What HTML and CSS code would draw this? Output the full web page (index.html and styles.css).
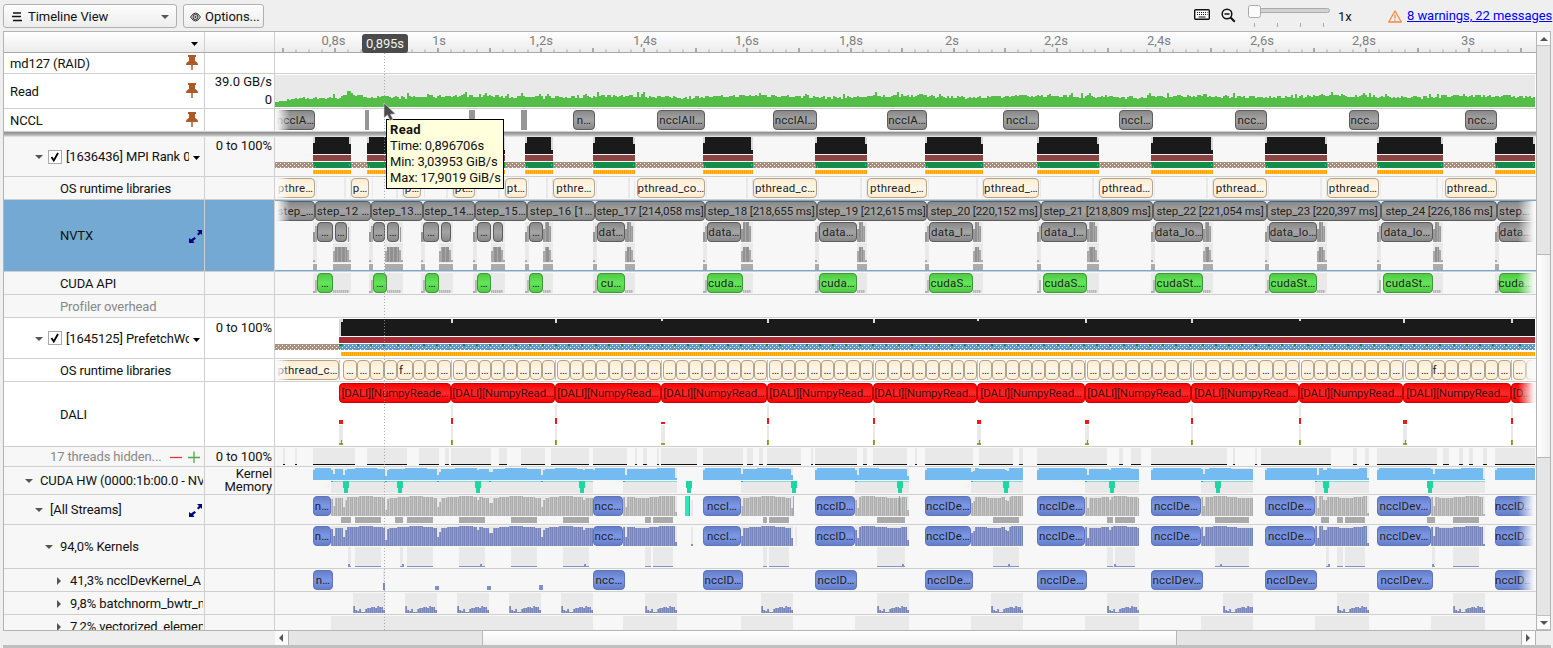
FILE: index.html
```
<!DOCTYPE html>
<html lang="en">
<head>
<meta charset="utf-8">
<title>Timeline View</title>
<link rel="stylesheet" href="styles.css">
</head>
<body>
<div class="app">
  <header class="toolbar">
    <button class="btn view-select">
      <svg class="ic-menu" width="12" height="10" viewBox="0 0 12 10"><path d="M2 1h8M1 4.500h9M2 8.500h9" stroke="#111" stroke-width="1.300"/></svg>
      <span class="view-name">Timeline View</span>
      <svg width="8" height="4" viewBox="0 0 8 4"><path d="M0 0h8L4 4z" fill="#555"/></svg>
    </button>
    <button class="btn options">
      <svg width="11" height="10" viewBox="0 0 11 10" fill="none" stroke="#222"><path d="M.6 5Q5.500-3 10.400 5Q5.500 13 .6 5z"/><circle cx="5.500" cy="5" r="2.500"/><circle cx="5.500" cy="5" r=".7"/></svg>
      <span>Options...</span>
    </button>
    <div class="spacer"></div>
    <svg class="keyboard" width="16" height="11" viewBox="0 0 16 11"><rect x=".7" y=".7" width="14.600" height="9.600" rx="1" fill="#fff" stroke="#111" stroke-width="1.400"/><path d="M3 3.500h10.500M3 5.500h10.500" stroke="#111" stroke-dasharray="1 1"/><path d="M4.500 8h7" stroke="#111"/></svg>
    <svg class="magnifier" width="15" height="15" viewBox="0 0 15 15" fill="none" stroke="#111" stroke-width="1.500"><circle cx="6" cy="6" r="4.800"/><path d="M3.500 6h5"/><path d="M9.500 9.500l4.300 4.300" stroke-width="2"/></svg>
    <svg class="slider" width="84" height="28" viewBox="1247 0 84 28"><rect x="1250.500" y="8.500" width="79" height="4" rx="2" fill="#d2d2d2" stroke="#ababab"/><rect x="1248.500" y="5.500" width="12" height="12" rx="2" fill="#fbfbfb" stroke="#aaa"/><path d="M1254.500 23v4M1277.500 23v4M1300.500 23v4M1323.500 23v4" stroke="#aaa"/></svg>
    <span class="zoom-value">1x</span>
    <svg class="warn" width="14" height="13" viewBox="0 0 14 13" fill="none" stroke="#f58a3c" stroke-width="1.300"><path d="M7 1L13.300 12H.7z" stroke-linejoin="round"/><path d="M7 4.500v4M7 9.500v1.300"/></svg>
    <a class="messages" href="#">8 warnings, 22 messages</a>
  </header>
  <main class="frame">
    <div class="grid" id="grid"></div>
    <div class="vscroll">
      <div class="sb-btn"><svg width="8" height="4" viewBox="0 0 8 4"><path d="M0 4L4 0L8 4z" fill="#555"/></svg></div>
      <div class="v-before"></div><div class="v-thumb"></div><div class="v-after"></div>
      <div class="sb-btn"><svg width="8" height="4" viewBox="0 0 8 4"><path d="M0 0L4 4L8 0z" fill="#555"/></svg></div>
    </div>
    <div class="cursor-line"></div>
    <div class="time-flag">0,895s</div>
    <div class="tooltip"><b>Read</b><span>Time: 0,896706s</span><span>Min: 3,03953 GiB/s</span><span>Max: 17,9019 GiB/s</span></div>
    <svg class="pointer" width="13" height="20" viewBox="0 0 13 20"><path d="M1 1v15l3.500-3l2.500 5.500l3-1.300l-2.500-5l5-.2z" fill="#4b4b4b" stroke="#ddd" stroke-width=".6"/></svg>
  </main>
  <div class="hscroll">
    <div class="h-gap"></div>
    <div class="sb-btn side"><svg width="4" height="8" viewBox="0 0 4 8"><path d="M4 0L0 4L4 8z" fill="#555"/></svg></div>
    <div class="h-before"></div><div class="h-thumb"></div><div class="h-after"></div>
    <div class="sb-btn side"><svg width="4" height="8" viewBox="0 0 4 8"><path d="M0 0L4 4L0 8z" fill="#555"/></svg></div>
  </div>
  <div class="footer-strip"></div>
</div>
<svg width="0" height="0" class="defs">
  <defs>
    <linearGradient id="gray" x2="0" y2="1"><stop offset="0" stop-color="#878787"/><stop offset=".5" stop-color="#a5a5a5"/><stop offset="1" stop-color="#878787"/></linearGradient>
    <linearGradient id="green" x2="0" y2="1"><stop offset="0" stop-color="#50c846"/><stop offset=".5" stop-color="#64e658"/><stop offset="1" stop-color="#50c846"/></linearGradient>
    <linearGradient id="cream" x2="0" y2="1"><stop offset="0" stop-color="#feebcd"/><stop offset=".5" stop-color="#fff7ea"/><stop offset="1" stop-color="#feebcd"/></linearGradient>
    <linearGradient id="red" x2="0" y2="1"><stop offset="0" stop-color="#fa0000"/><stop offset=".5" stop-color="#ff2a2a"/><stop offset="1" stop-color="#fa0000"/></linearGradient>
    <linearGradient id="blue" x2="0" y2="1"><stop offset="0" stop-color="#647cc4"/><stop offset=".5" stop-color="#7c98e8"/><stop offset="1" stop-color="#647cc4"/></linearGradient>
    <linearGradient id="fadeL"><stop offset="0" stop-color="#fafafa"/><stop offset=".2" stop-color="#fafafa" stop-opacity=".9"/><stop offset="1" stop-color="#fafafa" stop-opacity="0"/></linearGradient>
    <linearGradient id="fadeR"><stop offset="0" stop-color="#fafafa" stop-opacity="0"/><stop offset=".85" stop-color="#fafafa" stop-opacity=".95"/><stop offset="1" stop-color="#fafafa"/></linearGradient>
    <pattern id="sBlue" width="4" height="2" patternUnits="userSpaceOnUse"><rect width="4" height="2" fill="#7586bd"/><rect x="1" width="1" height="2" fill="#99a4c4"/><rect x="3" width="1" height="2" fill="#8b98c2"/></pattern>
    <pattern id="sGray" width="4" height="2" patternUnits="userSpaceOnUse"><rect width="4" height="2" fill="#adadad"/><rect x="1" width="1" height="2" fill="#cdcdcd"/><rect x="3" width="1" height="2" fill="#bcbcbc"/></pattern>
    <pattern id="sDark" width="4" height="2" patternUnits="userSpaceOnUse"><rect width="4" height="2" fill="#919191"/><rect x="1" width="1" height="2" fill="#aaa"/></pattern>
    <pattern id="sOrange" width="2" height="2" patternUnits="userSpaceOnUse"><rect width="1" height="2" fill="#ffa500"/><rect x="1" width="1" height="2" fill="#ffb938"/></pattern>
    <pattern id="hBrown" width="4" height="4" patternUnits="userSpaceOnUse"><rect width="4" height="4" fill="#ab8e7e"/><path d="M0 3h1v1H0zM2 1h1v1H2z" fill="#fff"/></pattern>
    <pattern id="hBlue" width="4" height="4" patternUnits="userSpaceOnUse"><rect width="4" height="4" fill="#5a9bd0"/><path d="M0 1h1v1H0zM2 3h1v1H2z" fill="#fff"/></pattern>
  </defs>
</svg>
<script src="timeline.js"></script>
</body>
</html>
```
FILE: styles.css
```
* { box-sizing: border-box; }
body { margin: 0; background: #efefef; color: #111; font: 13px/16px Roboto, sans-serif; letter-spacing: -.13px; overflow: hidden; }
svg { display: block; flex: none; }
.defs { position: absolute; }
.app { width: 1553px; height: 648px; display: flex; flex-direction: column; }
.toolbar { height: 31px; display: flex; align-items: center; padding: 1px 2px 0 3px; }
.btn { height: 24px; display: flex; align-items: center; font: inherit; letter-spacing: -.05px; color: inherit; border: 1px solid #b0b0b0; border-radius: 3px; background: linear-gradient(#fdfdfd, #ededed); padding: 2px 6px 0; }
.view-select { width: 174px; padding: 2px 7px 0 7px; }
.view-name { flex: 1; text-align: left; margin-left: 5px; }
.options { margin-left: 6px; width: 81px; gap: 4px; white-space: nowrap; }
.spacer { flex: 1; }
.keyboard { margin-right: 11px; margin-top: -3px; }
.magnifier { margin-right: 11px; margin-top: -2px; }
.slider { margin-right: 7px; align-self: flex-start; margin-top: -1px; }
.zoom-value { width: 50px; padding-top: 2px; }
.warn { margin-right: 5px; }
.messages { color: #00f; width: 144px; white-space: nowrap; letter-spacing: -.06px; }
.frame { position: relative; height: 600px; margin-left: 3px; width: 1548px; border: 1px solid #b4b4b4; display: flex; background: #fff; }
.grid { width: 1532px; height: 598px; overflow: hidden; display: flex; flex-direction: column; }
.row { display: flex; flex: none; border-bottom: 1px solid #cfcfcf; background: #f7f7f7; }
.row.white { background: #fff; }
.row.head { background: linear-gradient(#fff, #ececec); border-color: #a9a9a9; }
.row.selected .label, .row.selected .value { background: #74a9d3; }
.label { width: 201px; border-right: 1px solid #cfcfcf; display: flex; align-items: center; padding-right: 1px; padding-top: 1px; overflow: hidden; }
.value { width: 70px; border-right: 1px solid #cfcfcf; text-align: right; padding: 0 2px 0 0; line-height: 13px; letter-spacing: -.05px; }
.value div { padding-top: 3px; }
.value.read div { padding: 1px 0 4px; }
.value.high div { padding-top: 2px; }
.value.tight div { padding: 0; }
.name { flex: 1; white-space: nowrap; overflow: hidden; }
.muted { color: #888; }
.arrow { margin-right: 7px; }
.check { width: 14px; height: 14px; border: 1px solid #aaa; background: #fff; margin: -1px 4px 0 -2px; flex: none; }
.pin { margin: -2px 4px 0 0; }
.drop { margin: 2px 3px 0 4px; }
.drop.wide { margin-right: 5px; }
.divider { flex: none; height: 5px; background: linear-gradient(#8e8e8e, #a9a9a9 45%, #bbb 65%, #eee); }
.track { width: 1261px; }
.ev { font-size: 11.500px; fill: #222; letter-spacing: .2px; text-anchor: middle; }
.ev.long { letter-spacing: -.1px; }
.ev.dark { fill: #4a0a0a; letter-spacing: -.13px; }
.tick-label { font-size: 13px; fill: #808080; text-anchor: middle; letter-spacing: 0; }
.vscroll { width: 14px; border-left: 1px solid #b4b4b4; display: flex; flex-direction: column; background: #e5e5e5; }
.sb-btn { height: 14px; flex: none; background: #fbfbfb; display: flex; align-items: center; justify-content: center; border-bottom: 1px solid #c0c0c0; }
.v-before { height: 208px; }
.v-thumb { height: 204px; background: linear-gradient(90deg, #fff, #efefef); border: solid #b8b8b8; border-width: 1px 0; }
.v-after { flex: 1; border-bottom: 1px solid #c0c0c0; }
.hscroll { height: 14px; display: flex; width: 1536px; background: #e5e5e5; }
.h-gap { width: 275px; background: #efefef; }
.sb-btn.side { width: 14px; height: 14px; border: 0; border-right: 1px solid #b4b4b4; padding-right: 1px; }
.h-before { width: 193px; }
.h-thumb { width: 695px; background: linear-gradient(#fff, #efefef); border: solid #b8b8b8; border-width: 0 1px; }
.h-after { flex: 1; border-right: 1px solid #b4b4b4; }
.footer-strip { flex: 1; margin: 0 2px 0 3px; background: #bfbfbf; }
.cursor-line { position: absolute; left: 380px; top: 21px; width: 1px; height: 577px; background: repeating-linear-gradient(#999 0 1px, transparent 1px 3px); opacity: .8; }
.time-flag { position: absolute; left: 358px; top: 2px; width: 46px; height: 19px; background: #4b4b4b; color: #f3f3f3; border-radius: 3px; line-height: 20px; text-align: center; letter-spacing: -.1px; }
.tooltip { position: absolute; left: 382px; top: 87px; width: 118px; height: 70px; border: 1px solid #000; background: #ffffdc; padding: 2px 0 0 3px; display: flex; flex-direction: column; white-space: nowrap; }
.tooltip b { letter-spacing: .3px; }
.pointer { position: absolute; left: 379px; top: 70px; }
```
FILE: timeline.js
```
const X0 = 275, W = 1261;
const LIGHT = '#e9e9e9';
const R = (x, y, x2, y2, f) => `<rect x="${x}" y="${y}" width="${x2 - x}" height="${y2 - y}" fill="${f}"/>`;
const STROKE = { gray: '#5c5c5c', green: '#3c9a36', cream: '#b3a58c', red: '#c80000', blue: '#5d76bd' };
const text = (s, x, y, c = 'ev') => `<text class="${c}" x="${x}" y="${y}">${s}</text>`;
function ev(x, x2, y, kind, s = '') {
  const l = Math.max(x, 270), r = Math.min(x2, 1545);
  const cx = s ? (Math.max(l, 276) + Math.min(r, 1532)) / 2 : 0;
  return `<rect x="${l + .5}" y="${y + .5}" width="${r - l - 1}" height="19" rx="3.500" fill="url(#${kind})" stroke="${STROKE[kind]}"/>` +
    (s ? text(s, cx, s === '…' ? y + 14 : y + 13.500, kind === 'red' ? 'ev dark' : s.length > 15 ? 'ev long' : 'ev') : '');
}
const fade = (y, l = true, r = true) =>
  (l ? `<rect x="275" y="${y}" width="15" height="20" fill="url(#fadeL)"/>` : '') +
  (r ? `<rect x="1518" y="${y}" width="18" height="20" fill="url(#fadeR)"/>` : '');
let seed = 7;
const rnd = () => (seed = (seed * 16807) % 2147483647) / 2147483647;

const steps = [270, 315, 371, 423, 475, 527, 595, 705, 817, 927, 1041, 1153, 1267, 1381, 1497, 1545];
const stepText = ['step_…', 'step_12 …', 'step_13…', 'step_14…', 'step_15…', 'step_16 [1…', 'step_17 [214,058 ms]', 'step_18 [218,655 ms]', 'step_19 [212,615 ms]', 'step_20 [220,152 ms]', 'step_21 [218,809 ms]', 'step_22 [221,054 ms]', 'step_23 [220,397 ms]', 'step_24 [226,186 ms]', 'step…'];
const busy = [[313, 351], [369, 403], [421, 453], [473, 505], [525, 553], [593, 635], [703, 753], [815, 867], [925, 983], [1037, 1099], [1151, 1213], [1265, 1327], [1377, 1443], [1495, 1545]];
const data = [[317, 333, '…'], [373, 385, '…'], [423, 439, '…'], [477, 491, '…'], [529, 543, '…'], [597, 625, 'dat…'], [707, 741, 'data…'], [819, 857, 'data…'], [929, 973, 'data_l…'], [1041, 1087, 'data_l…'], [1155, 1203, 'data_lo…'], [1269, 1317, 'data_lo…'], [1381, 1433, 'data_lo…'], [1499, 1545, 'data…']];
const data2 = [[335, 347], [387, 399], [441, 451], [493, 503]];
const cuda = ['…', '…', '…', '…', '…', 'cu…', 'cuda…', 'cuda…', 'cudaS…', 'cudaS…', 'cudaSt…', 'cudaSt…', 'cudaSt…', 'cuda…'];
const waits = [[270, 315, 'pthre…'], [351, 369, 'p…'], [403, 421, 'p…'], [453, 475, 'pt…'], [505, 527, 'pt…'], [553, 595, 'pthre…'], [637, 705, 'pthread_co…'], [753, 817, 'pthread_c…'], [867, 927, 'pthread_…'], [983, 1039, 'pthread_…'], [1099, 1153, 'pthread…'], [1213, 1267, 'pthread…'], [1327, 1379, 'pthread…'], [1445, 1497, 'pthread…']];
const dali = [339, 451, 555, 661, 767, 873, 977, 1085, 1191, 1299, 1403, 1511, 1545];
const compute = [[331, 593], [623, 677], [741, 793], [855, 909], [971, 1023], [1085, 1139], [1201, 1253], [1315, 1369], [1431, 1485]];
const nccl = [[313, 331, 'n…', 'n…'], [593, 623, 'ncc…', 'ncc…'], [703, 741, 'nccl…', 'ncclD…'], [815, 855, 'ncclD…', 'ncclD…'], [925, 971, 'ncclDe…', 'ncclDe…'], [1037, 1085, 'ncclDe…', 'ncclDe…'], [1151, 1201, 'ncclDe…', 'ncclDev…'], [1265, 1315, 'ncclDe…', 'ncclDev…'], [1377, 1431, 'ncclDev…', 'ncclDev…'], [1495, 1545, 'ncclD…', 'ncclD…']];
const memops = [343, 397, 475, 579, 686, 791, 897, 1003, 1109, 1215, 1323, 1427];
const dips = { 331: .85, 333: .5, 343: .45, 345: .8, 385: .3, 387: .85, 437: .45, 439: .7, 489: .65, 491: .65, 541: .45, 543: .8, 477: .8, 583: .8, 625: .45, 675: .2, 741: .5, 791: .4, 855: .8, 857: .4, 907: .3, 971: .65, 973: .75, 1005: .8, 1007: .75, 1087: .4, 1109: .8, 1203: .5, 1317: .4, 1323: .8, 1325: .8, 1367: .15, 1433: .5, 1483: .1 };
const blocks = [[341, 351], [355, 381], [395, 403], [407, 433], [459, 485], [511, 537], [563, 589], [645, 651], [653, 673], [763, 767], [769, 789], [877, 905], [993, 1019], [1107, 1113], [1115, 1135], [1215, 1249], [1321, 1329], [1337, 1343], [1345, 1365], [1427, 1435], [1453, 1479]];

function load(y, h, fill) {
  return compute.map(([a, b]) => {
    let s = R(a, y, b, y + h, LIGHT);
    for (let x = a; x < b; x += 2) {
      const wave = .95 + .04 * Math.sin(x / 8);
      s += R(x, y + Math.round(h * (1 - (dips[x] || wave))), Math.min(x + 2, b), y + h, fill);
    }
    return s;
  }).join('');
}
function ruler() {
  let s = '';
  for (let i = -4; i <= 92; i++) {
    const x = Math.round(334 + i * 12.888);
    if (x > 1535) break;
    s += i % 4 === 0 ? R(x, 48, x + 2, 52, '#aaa') : R(x, 49.500, x + 2, 52, '#cbcbcb');
  }
  [['0,8s', 333.5], ['1s', 439], ['1,2s', 541], ['1,4s', 645], ['1,6s', 747], ['1,8s', 851], ['2s', 952], ['2,2s', 1056], ['2,4s', 1159], ['2,6s', 1262], ['2,8s', 1364], ['3s', 1468]]
    .forEach(([l, x]) => s += text(l, x, 45, 'tick-label'));
  return s;
}
function readGraph() {
  let s = R(X0, 75, 1535, 107, LIGHT);
  for (let x = X0; x < 1535; x += 2) {
    let h = 9 + rnd() * 3 + Math.sin(x / 23) * .8 + (rnd() > .93 ? 3 : 0);
    if (x < 300) h = 4 + (x - 275) / 7 + rnd() * 2; else if (x < 340) h -= 2;
    if (x > 345 && x < 355) h = 17 - Math.abs(x - 348);
    s += R(x, Math.round(107 - h), x + 2, 107, '#55be49');
  }
  return s;
}
function ncclPins() {
  return [[365, 369], [469, 475], [521, 527]].map(([a, b]) => R(a, 110, b, 130, '#969696')).join('') +
    [[265, 315, 'ncclA…'], [573, 595, 'n…'], [657, 705, 'ncclAll…'], [773, 817, 'ncclAl…'], [887, 927, 'ncclA…'], [1003, 1039, 'nccl…'], [1119, 1153, 'nccl…'], [1235, 1267, 'ncc…'], [1349, 1379, 'ncc…'], [1465, 1497, 'ncc…']].map(e => ev(e[0], e[1], 110, 'gray', e[2])).join('') + fade(110, true, false);
}
function rankLoad() {
  let s = R(X0, 162, 1535, 168, 'url(#hBrown)');
  busy.forEach(([a, b], i) => {
    b = Math.min(b, 1535);
    if (i === 1) a = 367;
    s += R(a, 137, b, 154, '#d8d8d8') + R(a, 143, a + 2, 154, '#1a1a1a') + R(a + 2, 137, b - 2, 154, '#1a1a1a') + R(b - 2, b % 4 === 3 ? 144 : 150, b, 154, '#1a1a1a') +
      R(a, 154, b, 162, '#f7f7f7') + R(a, 155, b, 161, '#8c4343') + R(a, 162, b, 168, '#138d49') +
      R(a, 164, a + 1, 168, '#5a9bd0') + R(a + 2, 166, a + 3, 168, '#5a9bd0') + R(b - 2, 164, b - 1, 166, '#5a9bd0') + R(a, 170, b, 174, 'url(#sOrange)');
  });
  return s;
}
function osRank() {
  return busy.map(([a, b]) => R(a + 3, 178, a + 4, 198, LIGHT) + R(b - 7, 178, b - 5, 198, LIGHT) + R(b - 1, 178, b, 198, LIGHT)).join('') +
    waits.map(e => ev(e[0], e[1], 178, 'cream', e[2])).join('') + fade(178, true, false);
}
function nvtx() {
  let s = '';
  busy.forEach(([a, b], i) => {
    const [d, e, t] = data[i];
    const c = data2[i], tail = c ? c[0] - 2 : e;
    s += R(a, 222, a + 4, 242, LIGHT) + R(a, 232, a + 2, 242, '#969696') + R(a + 2, 226, a + 4, 242, '#aaa');
    s += R(e, 222, b, 242, LIGHT);
    if (!c) s += R(e + 2, 222, b - 4, 242, 'url(#sDark)') + R(b - 4, 226, b - 2, 242, '#aaa') + R(e, 229, e + 2, 242, '#999');
    s += R(b - 3, 227, b - 2, 242, '#999') + ev(d, e, 222, 'gray', t) + (c ? ev(c[0], c[1], 222, 'gray', i === 0 || i === 1 ? '…' : '') : '');
    s += R(a, 243, a + 4, 263, LIGHT) + R(a, 260, a + 2, 262, '#aaa') + R(a, 264, a + 4, 270, '#ababab');
    s += R(tail, 243, b, 263, LIGHT) + R(tail, 264, b, 270, '#ababab') + R(tail, 251, tail + 2, 262, '#aaa') + R(tail + 2, 247, b - 4, 262, 'url(#sDark)') + R(b - 4, 250, b - 2, 262, '#aaa') + R(b - 2, 260, b, 262, '#aaa');
  });
  stepText.forEach((t, i) => s += ev(steps[i], steps[i + 1], 201, 'gray', t));
  return s + fade(201) + fade(222, false) + R(X0, 200, 1536, 201, '#74a9d3') + R(X0, 270, 1536, 271, '#74a9d3');
}
function cudaApi() {
  return busy.map(([a, b], i) => {
    const d = data[i], e = i === 1 ? 387 : i === 6 ? 743 : d[1];
    let s = R(a, 273, a + 4, 293, LIGHT) + R(e, 273, b, 293, LIGHT) + R(a, 291, a + 2, 293, '#aaa') + R(a + 2, 280, a + 4, 293, '#bbb');
    for (let x = e; x < b - 2; x += 2) s += R(x, 290, x + 1.500, 293, '#b5b5b5');
    return s + ev(i === 2 ? 425 : i === 9 ? 1043 : i === 12 ? 1383 : d[0], e, 273, 'green', cuda[i]);
  }).join('') + fade(273, false);
}
function prefetch() {
  let s = R(339, 319, 345, 336, '#d8d8d8') + R(341, 322, 1535, 336, '#1a1a1a') + R(343, 319, 1535, 336, '#1a1a1a') + R(339, 337, 1535, 343, '#a92b33') + R(X0, 344, 339, 350, 'url(#hBrown)') + R(339, 344, 1535, 350, 'url(#hBlue)') + R(339, 344, 343, 346, '#138d49') + R(341, 352, 1535, 356, 'url(#sOrange)');
  dali.slice(1, -1).forEach((x, i) => s += R(x, 319, x + 2, i % 3 === 2 ? 321 : 323, '#ddd'));
  for (let x = 357; x < 1530; x += 13.2) s += R(Math.round(x), 344, Math.round(x) + 2, 346, '#138d49') + R(Math.round(x) - 2, 349, Math.round(x), 350, '#c88058');
  return s;
}
function osPrefetch() {
  let s = ev(265, 339, 360, 'cream', 'pthread_c…');
  const first = [343, 357, 370, 384, 397, 413, 425, 438, 451];
  for (let k = 0; k < dali.length - 1; k++) {
    const a = dali[k] + 2, b = k === 11 ? 1616 : dali[k + 1], w = (b - a) / 8;
    s += R(dali[k], 360, dali[k] + 1, 380, '#c8bda8');
    for (let j = 0; j < 8; j++) {
      const l = k ? Math.round(a + w * j) : first[j], r = k ? Math.round(a + w * (j + 1)) : first[j + 1];
      if (l < 1535) s += ev(l, r, 360, 'cream', (k === 0 && j === 4) || (k === 10 && j === 2) ? 'f…' : (l > 1520 ? '' : '…'));
    }
  }
  return s + fade(360);
}
function daliRow() {
  let s = '';
  dali.slice(0, -1).forEach((a, i) => {
    const wide = [0, 3, 6, 7, 10].includes(i), w = wide ? 4 : 2;
    s += ev(a, dali[i + 1], 383, 'red', i === 0 ? '[DALI][NumpyReade…' : i === 11 ? '[D…' : '[DALI][NumpyRead…');
    if (!wide) s += R(a, 404, a + 2, 424, LIGHT);
    s += R(a, i === 3 ? 422 : wide ? 420 : 418, a + w, 424, '#f01818') + R(a, 425, a + w, 445, LIGHT) + R(a, wide ? 443 : 440, a + w, 445, '#9aa52c') + (i === 3 ? '' : R(wide ? a + 2 : a, 440, wide ? a + 3 : a + 1, 445, '#88942a'));
  });
  return s + fade(383, false);
}
function threads() {
  return [[283, 285], [295, 297], [313, 355], [367, 407], [419, 439], [445, 449], [451, 491], [499, 507], [521, 545], [551, 589], [593, 627], [635, 637], [643, 647], [657, 659], [661, 697], [703, 743], [747, 753], [759, 763], [767, 801], [811, 813], [815, 857], [863, 867], [873, 907], [915, 917], [925, 973], [979, 1013], [1019, 1023], [1037, 1107], [1119, 1123], [1131, 1141], [1151, 1227], [1233, 1235], [1255, 1257], [1261, 1331], [1353, 1357], [1365, 1369], [1377, 1437], [1443, 1449], [1459, 1463], [1469, 1473], [1483, 1487], [1495, 1535]]
    .map(([a, b]) => R(a, 448, b, 465, LIGHT) + R(a, 464, b, 465, '#111')).join('');
}
function hardware() {
  let s = load(468, 12, '#74bbf1');
  nccl.forEach(([a, b]) => s += R(a, 468, Math.min(b, 1535), 480, '#74bbf1') + R(a, 468, a + 2, 470, '#e0e8ee'));
  compute.forEach(([a, b]) => s += R(a, 481, b, 493, LIGHT) + R(a, 481, b, 482, '#7fdedb') + R(a, 481, a + 2, 482, '#22a8e8'));
  [385, 437, 489, 541].forEach(x => s += R(x, 481, x + 2, 482, '#22a8e8'));
  memops.forEach(x => s += R(x, 481, x + 6, 488, '#1fd6a3') + R(x + 1, 488, x + 5, 493, '#1fd6a3'));
  return s;
}
function streams() {
  let s = load(496, 20, 'url(#sGray)');
  nccl.forEach(([a, b, t]) => s += ev(a, b, 496, 'blue', t));
  blocks.forEach(([a, b]) => s += R(a, 517, b, 523, '#aaa'));
  s += R(685, 496, 690, 516, '#28eabb') + R(689, 496, 690, 516, '#888') + R(691, 500, 693, 516, LIGHT) + R(793, 496, 794, 516, '#32e0b6') + R(899, 496, 900, 516, '#32d0a6');
  return s + fade(496, false);
}
function kernels() {
  let s = load(526, 20, 'url(#sBlue)');
  nccl.forEach(([a, b, t]) => s += ev(a, b, 526, 'blue', t));
  blocks.forEach(([a, b]) => {
    if (b - a < 11 && b - a > 7) a = b - 3;
    s += R(a, 547, b, 567, LIGHT) + R(a, 566, b, 567, '#7f92cc');
  });
  memops.forEach(x => { if (![686, 791].includes(x)) s += R(x + 5, 564, x + 7, 567, '#7f92cc'); });
  return s + R(691, 527, 693, 546, LIGHT) + R(691, 544, 693, 546, '#7f92cc') + R(795, 527, 797, 546, LIGHT) + fade(526, false);
}
function ncclKernel() {
  return nccl.map(([a, b, , t]) => ev(a, b + 2, 570, 'blue', t)).join('') + R(383, 570, 385, 590, LIGHT) + R(383, 583, 385, 590, '#7186c2') + R(435, 586, 439, 590, '#8090c8') + R(487, 586, 491, 590, '#8090c8') + R(539, 585, 543, 590, '#8090c8') + fade(570, false);
}
function batchnorm() {
  const heights = [7, 3, 2, 4, 1, 1, 4, 5, 5, 6, 6, 5, 7, 6, 6, 3];
  return [[353, 385], [405, 437], [457, 489], [509, 541], [561, 593], [645, 677], [761, 793], [877, 909], [991, 1023], [1107, 1139], [1223, 1253], [1337, 1369], [1453, 1485]].map(([a, b]) => {
    let s = R(a, 593, b, 613, LIGHT);
    heights.forEach((h, i) => { if (a + i * 2 < b) s += R(a + i * 2, 613 - h, a + i * 2 + 2, 613, 'url(#sBlue)'); });
    return s;
  }).join('');
}
const vectorized = () => compute.map(([a, b]) => R(a, 616, b, 630, LIGHT)).join('');

const arrowDown = '<svg class="arrow" width="8" height="4" viewBox="0 0 8 4"><path d="M0 0h8L4 4z" fill="#555"/></svg>';
const arrowRight = '<svg class="arrow" width="8" height="8" viewBox="0 0 8 8"><path d="M2 0v8L6 4z" fill="#555"/></svg>';
const check = '<span class="check"><svg width="12" height="12" viewBox="0 0 12 12"><path d="M2.500 6l2.300 3.500L9 2" fill="none" stroke="#000" stroke-width="1.800"/></svg></span>';
const pin = '<svg class="pin" width="14" height="15" viewBox="0 0 14 15"><path d="M3 0h8v2H10v4q3 1 3 4H1q0-3 3-4V2H3z" fill="#ad5a2b"/><path d="M7 10v5" stroke="#ad5a2b" stroke-width="1.500"/></svg>';
const drop = c => `<svg class="drop ${c}" width="7" height="4" viewBox="0 0 7 4"><path d="M0 0h7L3.500 4z" fill="#000"/></svg>`;
const expand = '<svg width="14" height="13" viewBox="0 0 14 13" fill="#00007c"><path d="M8 0h5v5l-1.500-1.500L9.500 5.500L8 4l2-2zM5.500 7L7 8.500L4 11l1.500 2H0V8l2 1.500z"/></svg>';
const plusMinus = '<svg width="33" height="12" viewBox="0 0 33 12"><path d="M0 6.500h12" stroke="#d9363e" stroke-width="1.300"/><path d="M18 6.500h12M24 .5v12" stroke="#4bab4b" stroke-width="1.300"/></svg>';

/* top, bottom border y, indent, label markup before / name / after, value, track, classes */
const rows = [
  [32, 52, 6, '', '', drop('wide'), '', ruler, 'head'],
  [53, 73, 6, '', 'md127 (RAID)', pin, '', null, 'white'],
  [74, 108, 6, '', 'Read', pin, '<div>39.0 GB/s</div><div>0</div>', readGraph, 'white', 'read'],
  [109, 131, 6, '', 'NCCL', pin, '', ncclPins, 'white'],
  null,
  [137, 176, 31, arrowDown + check, '[1636436] MPI Rank 0', drop(''), '<div>0 to 100%</div>', rankLoad, '', 'high'],
  [177, 199, 56, '', 'OS runtime libraries', '', '', osRank, ''],
  [200, 271, 56, '', 'NVTX', expand, '', nvtx, 'selected'],
  [272, 294, 56, '', 'CUDA API', '', '', cudaApi, ''],
  [295, 317, 56, '', '<span class="muted">Profiler overhead</span>', '', '', null, ''],
  [318, 358, 31, arrowDown + check, '[1645125] PrefetchWo', drop(''), '<div>0 to 100%</div>', prefetch, 'white'],
  [359, 381, 56, '', 'OS runtime libraries', '', '', osPrefetch, 'white'],
  [382, 446, 56, '', 'DALI', '', '', daliRow, 'white'],
  [447, 466, 46, '', '<span class="muted">17 threads hidden...</span>', plusMinus, '<div>0 to 100%</div>', threads, ''],
  [467, 494, 21, arrowDown, 'CUDA HW (0000:1b:00.0 - NV', '', '<div>Kernel</div><div>Memory</div>', hardware, '', 'tight'],
  [495, 524, 31, arrowDown, '[All Streams]', expand, '', streams, ''],
  [525, 568, 41, arrowDown, '94,0% Kernels', '', '', kernels, ''],
  [569, 591, 51, arrowRight, '41,3% ncclDevKernel_A', '', '', ncclKernel, ''],
  [592, 614, 51, arrowRight, '9,8% batchnorm_bwtr_n', '', '', batchnorm, ''],
  [615, 637, 51, arrowRight, '7,2% vectorized_elemen', '', '', vectorized, '']
];
document.getElementById('grid').innerHTML = rows.map(r => {
  if (!r) return '<div class="divider"></div>';
  const [top, bottom, indent, pre, name, post, value, track, cls, vcls = ''] = r;
  const h = bottom - top;
  return `<div class="row ${cls}" style="height:${h + 1}px"><div class="label" style="padding-left:${indent}px">${pre}<span class="name">${name}</span>${post}</div><div class="value ${vcls}">${value}</div><svg class="track" width="${W}" height="${h}" viewBox="${X0} ${top} ${W} ${h}">${track ? track() : ''}</svg></div>`;
}).join('');
```
